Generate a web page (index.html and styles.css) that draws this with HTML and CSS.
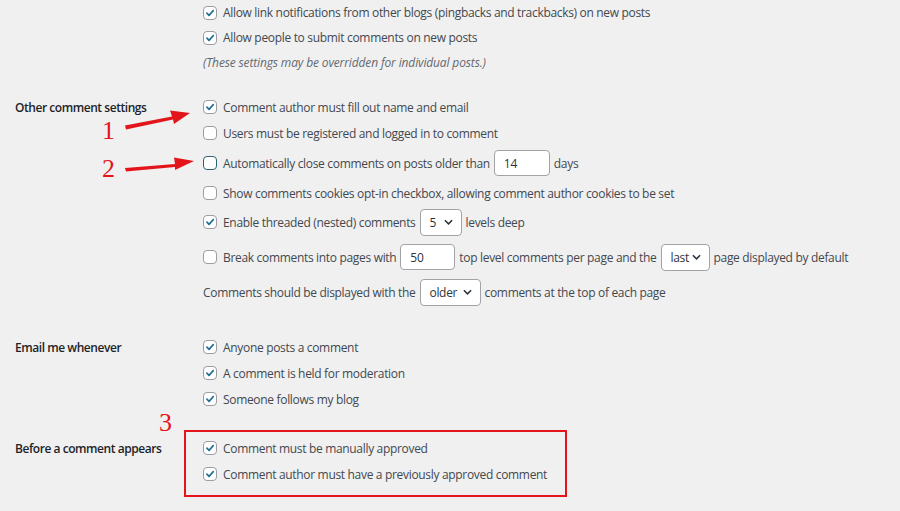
FILE: index.html
```html
<!DOCTYPE html>
<html lang="en">
<head>
<meta charset="utf-8">
<title>Discussion Settings</title>
<link rel="stylesheet" href="styles.css">
</head>
<body>
<div class="page">
  <div class="section s1">
    <div class="label"></div>
    <div class="fields">
      <div class="row"><span class="cb on"><svg viewBox="0 0 14 14"><path d="M3.4 7.2 L5.9 9.8 L10.8 4.2"/></svg></span>Allow link notifications from other blogs (pingbacks and trackbacks) on new posts</div>
      <div class="row"><span class="cb on"><svg viewBox="0 0 14 14"><path d="M3.4 7.2 L5.9 9.8 L10.8 4.2"/></svg></span>Allow people to submit comments on new posts</div>
      <div class="row note">(These settings may be overridden for individual posts.)</div>
    </div>
  </div>

  <div class="section s2">
    <div class="label">Other comment settings</div>
    <div class="fields">
      <div class="row"><span class="cb on"><svg viewBox="0 0 14 14"><path d="M3.4 7.2 L5.9 9.8 L10.8 4.2"/></svg></span>Comment author must fill out name and email</div>
      <div class="row"><span class="cb"></span>Users must be registered and logged in to comment</div>
      <div class="row h34"><span class="cb focus"></span>Automatically close comments on posts older than<span class="input w56">14</span>days</div>
      <div class="row"><span class="cb"></span>Show comments cookies opt-in checkbox, allowing comment author cookies to be set</div>
      <div class="row h32"><span class="cb on"><svg viewBox="0 0 14 14"><path d="M3.4 7.2 L5.9 9.8 L10.8 4.2"/></svg></span>Enable threaded (nested) comments<span class="select w42">5<svg viewBox="0 0 10 6"><path d="M1 1 L5 5 L9 1"/></svg></span>levels deep</div>
      <div class="row h38"><span class="cb"></span>Break comments into pages with<span class="input w55">50</span>top level comments per page and the<span class="select w49">last<svg viewBox="0 0 10 6"><path d="M1 1 L5 5 L9 1"/></svg></span>page displayed by default</div>
      <div class="row h32">Comments should be displayed with the<span class="select w61">older<svg viewBox="0 0 10 6"><path d="M1 1 L5 5 L9 1"/></svg></span>comments at the top of each page</div>
    </div>
  </div>

  <div class="section s3">
    <div class="label">Email me whenever</div>
    <div class="fields">
      <div class="row"><span class="cb on"><svg viewBox="0 0 14 14"><path d="M3.4 7.2 L5.9 9.8 L10.8 4.2"/></svg></span>Anyone posts a comment</div>
      <div class="row"><span class="cb on"><svg viewBox="0 0 14 14"><path d="M3.4 7.2 L5.9 9.8 L10.8 4.2"/></svg></span>A comment is held for moderation</div>
      <div class="row"><span class="cb on"><svg viewBox="0 0 14 14"><path d="M3.4 7.2 L5.9 9.8 L10.8 4.2"/></svg></span>Someone follows my blog</div>
    </div>
  </div>

  <div class="section s4">
    <div class="label">Before a comment appears</div>
    <div class="fields">
      <div class="row"><span class="cb on"><svg viewBox="0 0 14 14"><path d="M3.4 7.2 L5.9 9.8 L10.8 4.2"/></svg></span>Comment must be manually approved</div>
      <div class="row"><span class="cb on"><svg viewBox="0 0 14 14"><path d="M3.4 7.2 L5.9 9.8 L10.8 4.2"/></svg></span>Comment author must have a previously approved comment</div>
    </div>
  </div>

  <div class="highlight"></div>
  <svg class="annotations" width="900" height="511" viewBox="0 0 900 511">
    <g fill="#e3151b" stroke="none">
      <path d="M125 125.5 L172 116.5 L170 110.5 L190 113 L174 124 L173 119.5 L126 129.5 Z"/>
      <path d="M125 168 L175 164 L174 157.5 L194 161 L175 170 L175 167 L126 171.5 Z"/>
      <text x="102" y="139" class="num">1</text>
      <text x="102" y="177" class="num">2</text>
      <text x="159" y="431" class="num">3</text>
    </g>
  </svg>
</div>
</body>
</html>
```

FILE: styles.css
```css
html, body {
  margin: 0;
  padding: 0;
  background: #f0f0f1;
}

.page {
  position: relative;
  width: 900px;
  height: 511px;
  overflow: hidden;
  padding-left: 15px;
  box-sizing: border-box;
  font-family: "Open Sans", "Noto Sans", sans-serif;
  font-size: 12px;
  letter-spacing: -0.32px;
  color: #43484e;
}

.section {
  display: grid;
  grid-template-columns: 188px 1fr;
}

.s1 { margin-top: 0; }
.s2 { margin-top: 19px; }
.s3 { margin-top: 26px; }
.s4 { margin-top: 23px; }

.label {
  height: 26px;
  display: flex;
  align-items: center;
  font-weight: 600;
  letter-spacing: -0.45px;
  color: #1d2327;
}

.s1 .label { height: 25px; }

.fields {
  display: flex;
  flex-direction: column;
}

.row {
  height: 26px;
  display: flex;
  align-items: center;
  white-space: nowrap;
}

.s1 .row { height: 25px; }

.row.h34 { height: 34px; }
.row.h32 { height: 32px; }
.row.h38 { height: 38px; }

.note {
  font-style: italic;
  letter-spacing: -0.14px;
  color: #646970;
}

.cb {
  flex: none;
  width: 14px;
  height: 14px;
  box-sizing: border-box;
  border: 1px solid #9a9da2;
  border-radius: 4px;
  background: #fff;
  margin-right: 6px;
  display: flex;
  align-items: center;
  justify-content: center;
}

.cb svg {
  width: 14px;
  height: 14px;
  fill: none;
  stroke: #1f6f93;
  stroke-width: 1.9;
  stroke-linecap: round;
  stroke-linejoin: round;
}

.cb.focus {
  border: 1.5px solid #2c6170;
}

.input, .select {
  flex: none;
  box-sizing: border-box;
  height: 26px;
  border: 1px solid #a0a3a8;
  border-radius: 4px;
  background: #fff;
  display: inline-flex;
  align-items: center;
  padding-left: 9px;
  margin: 0 4px;
  color: #2c3338;
}

.select {
  height: 27px;
  justify-content: space-between;
  padding-right: 8px;
}

.select svg {
  width: 9px;
  height: 6px;
  fill: none;
  stroke: #2c3338;
  stroke-width: 1.7;
}

.w56 { width: 56px; }
.w55 { width: 55px; }
.w42 { width: 42px; }
.w49 { width: 49px; }
.w61 { width: 61px; }

.highlight {
  position: absolute;
  left: 184px;
  top: 430px;
  width: 383px;
  height: 67px;
  box-sizing: border-box;
  border: 2px solid #e3151b;
}

.annotations {
  position: absolute;
  left: 0;
  top: 0;
  pointer-events: none;
}

.num {
  font-family: "Liberation Serif", "Times New Roman", serif;
  font-size: 26px;
  letter-spacing: 0;
}
```
